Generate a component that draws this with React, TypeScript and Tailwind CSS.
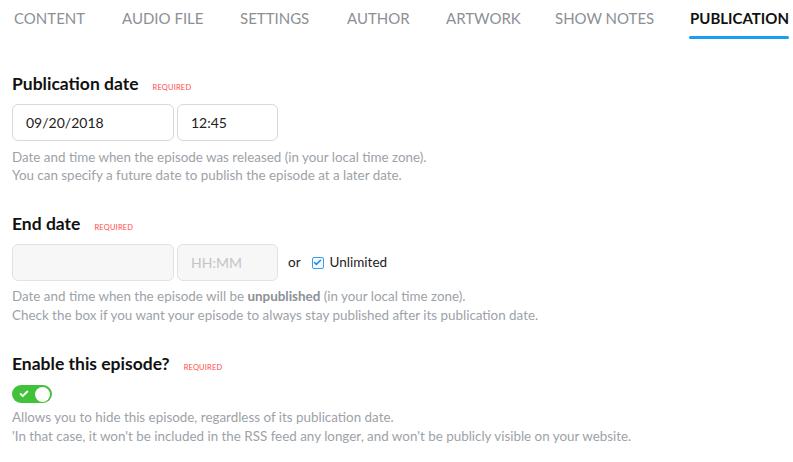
import { Check } from 'lucide-react';

const tabs = [
    { label: 'CONTENT', w: 'w-[108px]' },
    { label: 'AUDIO FILE', w: 'w-[118px]' },
    { label: 'SETTINGS', w: 'w-[107px]' },
    { label: 'AUTHOR', w: 'w-[99px]' },
    { label: 'ARTWORK', w: 'w-[109px]' },
    { label: 'SHOW NOTES', w: 'w-[136px]' },
];

function Heading({ title }: { title: string }) {
    return (
        <div className="flex items-baseline">
            <h2 className="text-[17.5px] leading-[22px] font-bold text-[#111]">{title}</h2>
            <span className="ml-[14px] text-[7.5px] tracking-wide text-[#ff4b4b]">REQUIRED</span>
        </div>
    );
}

export default function App() {
    return (
        <div className="w-[793px] h-[462px] bg-white overflow-hidden" style={{ fontFamily: 'Lato, "Open Sans", sans-serif' }}>
            {/* Tabs */}
            <div className="flex h-[40px] items-start whitespace-nowrap pl-[14px] pt-[8px] text-[15px] leading-[20px] text-[#8c9096]">
                {tabs.map(t => (
                    <div key={t.label} className={t.w}>{t.label}</div>
                ))}
                <div className="relative -ml-[1px]">
                    <span className="font-bold text-[#111]">PUBLICATION</span>
                    <div className="absolute left-[-1px] right-[0px] top-[28px] h-[3px] rounded-full bg-[#1a9df2]" />
                </div>
            </div>

            <div className="px-3 pt-[33px]">
                {/* Publication date */}
                <Heading title="Publication date" />
                <div className="mt-[9px] flex gap-[3px]">
                    <div className="flex h-[37px] w-[162px] items-center rounded-[6px] border border-[#d9d9d9] pl-[13px] text-[14px] text-[#222]">09/20/2018</div>
                    <div className="flex h-[37px] w-[101px] items-center rounded-[6px] border border-[#d9d9d9] pl-[13px] text-[14px] text-[#222]">12:45</div>
                </div>
                <p className="mt-[7px] text-[13.4px] leading-[18px] text-[#9da2a8]">
                    Date and time when the episode was released (in your local time zone).
                    <br />
                    You can specify a future date to publish the episode at a later date.
                </p>

                {/* End date */}
                <div className="mt-[29px]">
                    <Heading title="End date" />
                </div>
                <div className="mt-[9px] flex items-center gap-[3px]">
                    <div className="h-[37px] w-[162px] rounded-[6px] border border-[#e2e2e2] bg-[#f7f7f7]" />
                    <div className="flex h-[37px] w-[101px] items-center rounded-[6px] border border-[#e2e2e2] bg-[#f7f7f7] pl-[13px] text-[14px] text-[#c4c4c4]">HH:MM</div>
                    <span className="ml-[7px] text-[13.5px] text-[#222]">or</span>
                    <span className="ml-[8px] flex h-[12px] w-[12px] items-center justify-center rounded-[2px] border border-[#3b9de8] bg-[#f3f9fe]">
                        <Check className="h-[9px] w-[9px] text-[#1a8be0]" strokeWidth={4} />
                    </span>
                    <span className="ml-[3px] text-[13.5px] text-[#222]">Unlimited</span>
                </div>
                <p className="mt-[6px] text-[13.4px] leading-[19px] text-[#9da2a8]">
                    Date and time when the episode will be <b className="font-bold text-[#8b9096]">unpublished</b> (in your local time zone).
                    <br />
                    Check the box if you want your episode to always stay published after its publication date.
                </p>

                {/* Enable */}
                <div className="mt-[28px]">
                    <Heading title="Enable this episode?" />
                </div>
                <div className="mt-[10px] flex h-[18px] w-[40px] items-center justify-between rounded-full bg-[#42c13a] pl-[7px] pr-[2px]">
                    <Check className="h-[10px] w-[10px] text-white" strokeWidth={4.5} />
                    <div className="h-[15px] w-[15px] rounded-full bg-white" />
                </div>
                <p className="mt-[5px] text-[13.4px] leading-[19px] text-[#9da2a8]">
                    Allows you to hide this episode, regardless of its publication date.
                    <br />
                    'In that case, it won't be included in the RSS feed any longer, and won't be publicly visible on your website.
                </p>
            </div>
        </div>
    );
}
